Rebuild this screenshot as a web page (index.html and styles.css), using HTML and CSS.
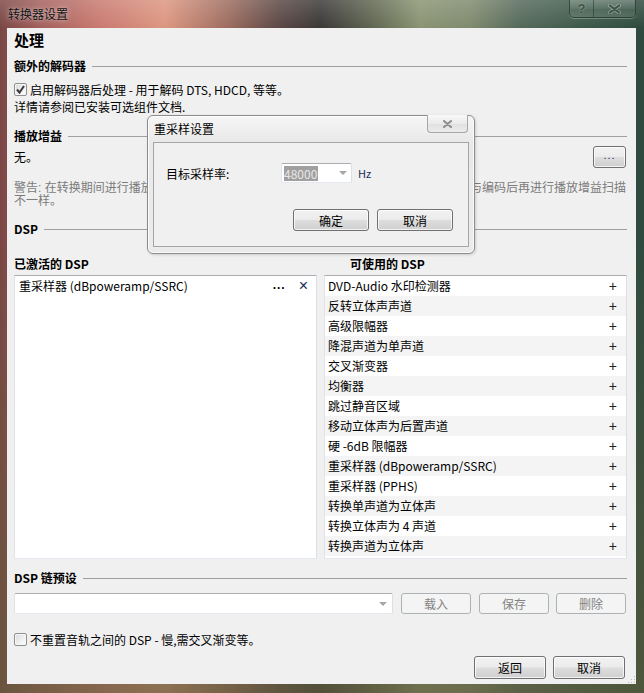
FILE: index.html
```html
<!DOCTYPE html>
<html lang="zh-CN">
<head>
<meta charset="utf-8">
<title>转换器设置</title>
<link rel="stylesheet" href="styles.css">
</head>
<body>
<div class="window">
  <div class="titlebar">
    <span class="title">转换器设置</span>
    <div class="caption">
      <span class="cap-btn cap-help">?</span>
      <span class="cap-btn cap-close"><svg width="13" height="10" viewBox="0 0 13 10"><path d="M2 1.5 L11 8.5 M11 1.5 L2 8.5" stroke="#e9efe9" stroke-opacity="0.35" stroke-width="4" stroke-linecap="round"/><path d="M2 1.5 L11 8.5 M11 1.5 L2 8.5" stroke="#3d5346" stroke-width="2.2" stroke-linecap="round"/></svg></span>
    </div>
  </div>

  <div class="client">
    <h1 class="page-title">处理</h1>

    <div class="group-h">额外的解码器</div>
    <div class="check-line">
      <span class="cb"><svg width="11" height="11" viewBox="0 0 11 11"><path d="M2 5.5 L4.5 8.5 L9 2" fill="none" stroke="#3b3b3b" stroke-width="2"/></svg></span>
      <span>启用解码器后处理 - 用于解码 DTS, HDCD, 等等。</span>
    </div>
    <div class="note">详情请参阅已安装可选组件文档.</div>

    <div class="group-h gap-13">播放增益</div>
    <div class="rg-row">
      <span>无。</span>
      <button class="btn btn-dots">...</button>
    </div>
    <div class="warning">
      <div class="warn-line"><span>警告: 在转换期间进行播放增益扫描</span><span>结果与编码后再进行播放增益扫描</span></div>
      <div class="warn-line">不一样。</div>
    </div>

    <div class="group-h gap-13">DSP</div>
    <div class="dsp-cols">
      <div class="dsp-col">
        <div class="col-h">已激活的 DSP</div>
        <div class="list">
          <div class="row active-row">
            <span class="row-text">重采样器 (dBpoweramp/SSRC)</span>
            <span class="row-tools"><span class="dots">...</span><span class="remove">×</span></span>
          </div>
        </div>
      </div>
      <div class="dsp-col">
        <div class="col-h col-h-right">可使用的 DSP</div>
        <div class="list">
          <div class="row"><span class="row-text">DVD-Audio 水印检测器</span><span class="plus">+</span></div>
          <div class="row"><span class="row-text">反转立体声声道</span><span class="plus">+</span></div>
          <div class="row"><span class="row-text">高级限幅器</span><span class="plus">+</span></div>
          <div class="row"><span class="row-text">降混声道为单声道</span><span class="plus">+</span></div>
          <div class="row"><span class="row-text">交叉渐变器</span><span class="plus">+</span></div>
          <div class="row"><span class="row-text">均衡器</span><span class="plus">+</span></div>
          <div class="row"><span class="row-text">跳过静音区域</span><span class="plus">+</span></div>
          <div class="row"><span class="row-text">移动立体声为后置声道</span><span class="plus">+</span></div>
          <div class="row"><span class="row-text">硬 -6dB 限幅器</span><span class="plus">+</span></div>
          <div class="row"><span class="row-text">重采样器 (dBpoweramp/SSRC)</span><span class="plus">+</span></div>
          <div class="row"><span class="row-text">重采样器 (PPHS)</span><span class="plus">+</span></div>
          <div class="row"><span class="row-text">转换单声道为立体声</span><span class="plus">+</span></div>
          <div class="row"><span class="row-text">转换立体声为 4 声道</span><span class="plus">+</span></div>
          <div class="row"><span class="row-text">转换声道为立体声</span><span class="plus">+</span></div>
        </div>
      </div>
    </div>

    <div class="group-h gap-11">DSP 链预设</div>
    <div class="preset-row">
      <div class="combo preset-combo"><span class="arrow"></span></div>
      <button class="btn btn-disabled preset-btn">载入</button>
      <button class="btn btn-disabled preset-btn">保存</button>
      <button class="btn btn-disabled preset-btn">删除</button>
    </div>

    <div class="check-line check-bottom">
      <span class="cb"></span>
      <span>不重置音轨之间的 DSP - 慢,需交叉渐变等。</span>
    </div>

    <div class="footer">
      <button class="btn footer-btn">返回</button>
      <button class="btn footer-btn">取消</button>
    </div>

    <svg class="grip" width="9" height="9" viewBox="0 0 9 9">
      <g fill="#b9b9b9"><rect x="7" y="1" width="1" height="1"/><rect x="4" y="4" width="1" height="1"/><rect x="7" y="4" width="1" height="1"/><rect x="1" y="7" width="1" height="1"/><rect x="4" y="7" width="1" height="1"/><rect x="7" y="7" width="1" height="1"/></g>
    </svg>
  </div>

  <div class="dialog">
    <div class="dlg-title">
      <span class="dlg-title-text">重采样设置</span>
      <span class="dlg-close"><svg width="11" height="8" viewBox="0 0 11 8"><path d="M2 1 L9 7 M9 1 L2 7" stroke="#8d8d8d" stroke-width="2" stroke-linecap="round"/></svg></span>
    </div>
    <div class="dlg-client">
      <div class="dlg-row">
        <span class="dlg-label">目标采样率:</span>
        <div class="combo rate-combo"><span class="sel">48000</span><span class="arrow"></span></div>
        <span class="unit">Hz</span>
      </div>
      <div class="dlg-buttons">
        <button class="btn dlg-btn">确定</button>
        <button class="btn dlg-btn">取消</button>
      </div>
    </div>
  </div>
</div>
</body>
</html>
```

FILE: styles.css
```css
* { box-sizing: border-box; }

html, body {
  margin: 0;
  padding: 0;
  background: #2f4a3e;
}

body {
  font-family: "Noto Sans CJK SC", "Liberation Sans", sans-serif;
  font-size: 12px;
  color: #000;
}

.window {
  position: relative;
  width: 644px;
  height: 693px;
  display: flex;
  flex-direction: column;
  padding: 0 8px 9px 7px;
  background:
    linear-gradient(to bottom, rgba(255,255,255,0.16) 0, rgba(255,255,255,0) 28px),
    linear-gradient(to bottom, rgba(0,0,0,0) 35%, rgba(96,92,58,0.65) 100%),
    linear-gradient(to right, #7a4744 0px, #a35f5c 40px, #c97a70 100px, #dc9680 165px, #a06e60 225px, #5a4744 280px, #3b3838 320px, #5e6450 370px, #8a9472 420px, #7f8a6e 470px, #55695a 520px, #3d5a4a 580px, #2e4a3e 644px);
}

/* ---------- title bar ---------- */
.titlebar {
  height: 28px;
  flex: none;
  display: flex;
  justify-content: space-between;
  align-items: flex-start;
  padding-left: 1px;
}

.title {
  line-height: 27px;
  font-size: 12px;
  color: #111;
  text-shadow: 0 0 6px rgba(255,255,255,0.55), 0 0 2px rgba(255,255,255,0.4);
}

.caption {
  display: flex;
  height: 18px;
  border: 1px solid rgba(30,45,36,0.55);
  border-top: none;
  border-radius: 0 0 5px 5px;
  overflow: hidden;
  box-shadow: 0 1px 0 rgba(255,255,255,0.25);
}

.cap-btn {
  display: flex;
  align-items: center;
  justify-content: center;
  height: 17px;
  background: linear-gradient(to bottom, rgba(255,255,255,0.22), rgba(255,255,255,0.08) 50%, rgba(255,255,255,0.02) 51%, rgba(255,255,255,0.12));
}

.cap-help {
  width: 24px;
  border-right: 1px solid rgba(30,45,36,0.5);
  font-family: "Liberation Sans", sans-serif;
  font-weight: bold;
  font-size: 13px;
  color: #3d5346;
  text-shadow: 0 0 2px rgba(235,240,235,0.5);
}

.cap-close {
  width: 41px;
}

/* ---------- client ---------- */
.client {
  position: relative;
  flex: 1;
  background: #f0f0f0;
  padding: 0 9px 5px 7px;
  display: flex;
  flex-direction: column;
}

.page-title {
  margin: 4px 0 0;
  height: 16px;
  line-height: 16px;
  font-size: 15px;
  font-weight: bold;
}

.group-h {
  display: flex;
  align-items: center;
  height: 16px;
  line-height: 16px;
  font-weight: bold;
  margin-top: 10px;
}

.group-h.gap-13 { margin-top: 13px; }
.group-h.gap-11 { margin-top: 11px; }

.group-h::after {
  content: "";
  flex: 1;
  border-top: 1px solid #a0a0a0;
  margin-left: 6px;
}

.check-line {
  display: flex;
  align-items: center;
  height: 17px;
  line-height: 17px;
  margin-top: 7px;
}

.cb {
  width: 13px;
  height: 13px;
  flex: none;
  margin-right: 3px;
  border: 1px solid #8e8f8f;
  border-radius: 2px;
  background: linear-gradient(135deg, #d9d9d9 0%, #f1f1f1 60%, #ffffff 100%);
  box-shadow: inset 0 0 0 1px #f6f6f6;
  display: flex;
  align-items: center;
  justify-content: center;
}

.note {
  height: 17px;
  line-height: 17px;
}

.rg-row {
  margin-top: 1px;
  height: 23px;
  display: flex;
  align-items: center;
  justify-content: space-between;
  padding-right: 1px;
}

.warning {
  margin-top: 14px;
  color: #7b7b7b;
  font-family: "Liberation Sans", "Noto Sans CJK SC", sans-serif;
}

.warn-line {
  height: 13px;
  line-height: 13px;
  display: flex;
  justify-content: space-between;
  white-space: nowrap;
  padding-right: 1px;
}

/* ---------- buttons ---------- */
.btn {
  font-family: inherit;
  font-size: 12px;
  color: #000;
  padding: 0;
  border: 1px solid #707070;
  border-radius: 3px;
  background: linear-gradient(to bottom, #f2f2f2 0%, #ebebeb 48%, #dddddd 52%, #cfcfcf 100%);
  box-shadow: inset 0 0 0 1px rgba(255,255,255,0.75);
  display: flex;
  align-items: center;
  justify-content: center;
}

.btn-dots {
  width: 33px;
  height: 22px;
  font-family: "Liberation Sans", sans-serif;
  font-size: 11px;
  letter-spacing: 1px;
  padding-bottom: 3px;
  color: #1b2a5a;
}

.btn-disabled {
  background: #f4f4f4;
  border-color: #adb2b5;
  color: #838383;
  box-shadow: none;
}

/* ---------- DSP lists ---------- */
.dsp-cols {
  display: flex;
  gap: 7px;
}

.dsp-col {
  width: 303px;
  display: flex;
  flex-direction: column;
}

.col-h {
  margin-top: 19px;
  height: 16px;
  line-height: 16px;
  font-weight: bold;
}

.col-h-right {
  padding-left: 26px;
}

.list {
  margin-top: 3px;
  height: 284px;
  background: #ffffff;
  border: 1px solid #abadb3;
  border-color: #abadb3 #dbdfe6 #e3e9ef #e2e3ea;
}

.list .row {
  height: 20px;
  line-height: 20px;
  display: flex;
  justify-content: space-between;
  padding: 0 9px 0 3px;
}

.list .row:nth-child(even) {
  background: #f4f4f4;
}

.active-row {
  padding-left: 4px !important;
}

.row-tools {
  display: flex;
  align-items: center;
  gap: 13px;
}

.dots {
  font-family: "Liberation Sans", sans-serif;
  font-weight: bold;
  letter-spacing: 1px;
  margin-top: -3px;
}

.remove {
  font-family: "Liberation Sans", sans-serif;
  font-size: 16px;
  color: #1b2a5a;
  margin-right: -1px;
}

.plus {
  font-family: "Liberation Sans", sans-serif;
  font-size: 14px;
  color: #222;
}

/* ---------- preset ---------- */
.preset-row {
  margin-top: 7px;
  height: 21px;
  display: flex;
  gap: 8px;
}

.combo {
  position: relative;
  background: #fff;
  border: 1px solid #abadb3;
  border-color: #abadb3 #dbdfe6 #e3e9ef #e2e3ea;
  border-radius: 2px;
}

.preset-combo {
  width: 379px;
  height: 21px;
}

.arrow {
  position: absolute;
  right: 5px;
  top: 8px;
  width: 0;
  height: 0;
  border-left: 4px solid transparent;
  border-right: 4px solid transparent;
  border-top: 4px solid #a6a6a6;
}

.preset-btn {
  width: 70px;
  height: 21px;
}

.preset-btn:last-child {
  margin-left: -1px;
}

.check-bottom {
  margin-top: 18px;
  height: 15px;
  line-height: 15px;
}

.footer {
  margin-top: 9px;
  display: flex;
  justify-content: flex-end;
  gap: 7px;
  padding-right: 2px;
}

.footer-btn {
  width: 72px;
  height: 23px;
}

.grip {
  position: absolute;
  right: 0;
  bottom: 0;
}

/* ---------- dialog ---------- */
.dialog {
  position: absolute;
  left: 147px;
  top: 115px;
  width: 328px;
  height: 139px;
  border: 1px solid #8c8c8c;
  border-radius: 6px;
  background: linear-gradient(to bottom, #f6f6f6 0, #e9e9e9 26px, #ebebeb 100%);
  box-shadow: inset 0 0 0 1px rgba(255,255,255,0.8), 1px 1px 3px rgba(0,0,0,0.15);
  padding: 0 5px 6px 5px;
  display: flex;
  flex-direction: column;
}

.dlg-title {
  height: 26px;
  flex: none;
  display: flex;
  justify-content: space-between;
  align-items: flex-start;
}

.dlg-title-text {
  padding-left: 1px;
  line-height: 25px;
  font-size: 12px;
}

.dlg-close {
  margin-top: -1px;
  margin-right: 1px;
  width: 41px;
  height: 18px;
  border: 1px solid #a7a7a7;
  border-top: none;
  border-radius: 0 0 4px 4px;
  background: linear-gradient(to bottom, #f9f9f9, #eaeaea 50%, #e0e0e0 51%, #ececec);
  display: flex;
  align-items: center;
  justify-content: center;
}

.dlg-client {
  flex: 1;
  border: 1px solid #a5a5a5;
  background: #f0f0f0;
  padding: 0 15px 0 12px;
}

.dlg-row {
  margin-top: 20px;
  height: 20px;
  display: flex;
  align-items: center;
}

.dlg-label {
  width: 115px;
  flex: none;
}

.rate-combo {
  width: 71px;
  height: 20px;
  display: flex;
  align-items: center;
  padding-left: 2px;
}

.rate-combo .arrow {
  right: 4px;
  top: 7px;
}

.sel {
  background: #a0a0a0;
  color: #e6e6e6;
  line-height: 15px;
  padding-right: 1px;
  font-size: 12px;
}

.unit {
  margin-left: 6px;
  font-size: 11px;
  color: #1b2a5a;
}

.dlg-buttons {
  margin-top: 26px;
  display: flex;
  justify-content: flex-end;
  gap: 8px;
}

.dlg-btn {
  width: 76px;
  height: 22px;
}
```
